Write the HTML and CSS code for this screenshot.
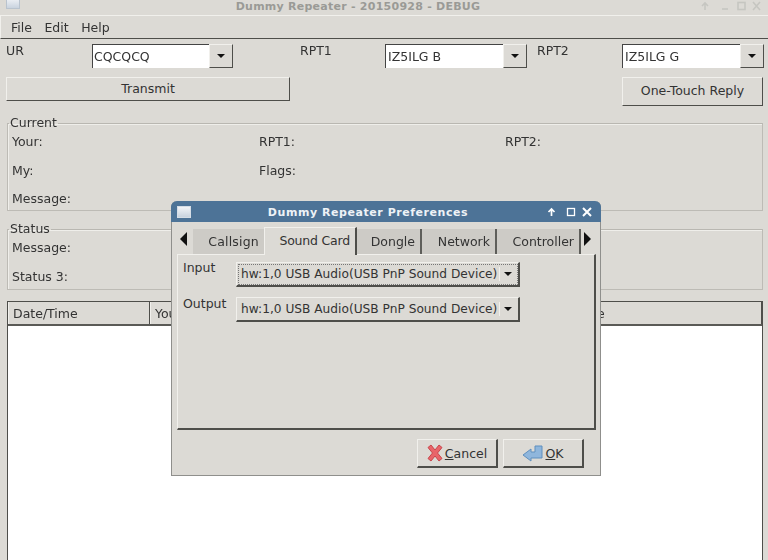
FILE: index.html
```html
<!DOCTYPE html>
<html lang="en">
<head>
<meta charset="utf-8">
<title>Dummy Repeater</title>
<link rel="stylesheet" href="styles.css">
</head>
<body>
<div class="desktop">
  <div class="main">
    <header class="titlebar">
      <span class="wm-icon"></span>
      <span class="title">Dummy Repeater - 20150928 - DEBUG</span>
      <span class="wm-buttons">
        <svg width="62" height="12" viewBox="0 0 62 12"><g fill="none" stroke="#c6c6c1" stroke-width="1.6"><path d="M5 10V3M2 6l3-3 3 3"/><path d="M22 9h6"/><rect x="38" y="2.500" width="7" height="7"/><path d="M53 2l7 8M60 2l-7 8"/></g></svg>
      </span>
    </header>
    <nav class="menubar"><span>File</span><span>Edit</span><span>Help</span></nav>
    <div class="callrow">
      <span class="lbl lbl-ur">UR</span>
      <div class="combo combo-ur"><span class="combo-text">CQCQCQ</span><span class="combo-btn"><i class="arrow"></i></span></div>
      <span class="lbl lbl-rpt1">RPT1</span>
      <div class="combo combo-r1"><span class="combo-text">IZ5ILG B</span><span class="combo-btn"><i class="arrow"></i></span></div>
      <span class="lbl lbl-rpt2">RPT2</span>
      <div class="combo combo-r2"><span class="combo-text">IZ5ILG G</span><span class="combo-btn"><i class="arrow"></i></span></div>
    </div>
    <div class="actionrow">
      <button class="btn btn-tx">Transmit</button>
      <button class="btn btn-reply">One-Touch Reply</button>
    </div>
    <fieldset class="group group-current">
      <legend>Current</legend>
      <div class="fields">
        <span>Your:</span><span>RPT1:</span><span>RPT2:</span>
        <span>My:</span><span>Flags:</span><span></span>
        <span>Message:</span><span></span><span></span>
      </div>
    </fieldset>
    <fieldset class="group group-status">
      <legend>Status</legend>
      <div class="fields">
        <span>Message:</span><span></span><span></span>
        <span>Status 3:</span><span></span><span></span>
      </div>
    </fieldset>
    <section class="list">
      <div class="list-head">
        <span class="col col-date">Date/Time</span>
        <span class="col col-your">Your</span>
        <span class="col col-msg">Message</span>
      </div>
      <div class="list-body"></div>
    </section>
  </div>

  <div class="dialog">
    <header class="dlg-title">
      <span class="wm-icon dlg-icon"></span>
      <span class="dlg-name">Dummy Repeater Preferences</span>
      <svg class="dlg-buttons" width="46" height="12" viewBox="0 0 46 12"><g fill="none" stroke="#fff" stroke-width="1.7"><path d="M4.500 10V3M1.500 6l3-3 3 3"/><rect x="20.500" y="2.500" width="7" height="7" stroke-width="1.3"/><path d="M36 2l8 8M44 2l-8 8" stroke-width="2"/></g></svg>
    </header>
    <div class="dlg-body">
      <div class="tabs">
        <i class="tab-arrow tab-arrow-l"></i>
        <span class="tab tab-callsign">Callsign</span>
        <span class="tab tab-active">Sound Card</span>
        <span class="tab tab-dongle">Dongle</span>
        <span class="tab tab-network">Network</span>
        <span class="tab tab-controller">Controller</span>
        <i class="tab-arrow tab-arrow-r"></i>
      </div>
      <div class="panel">
        <div class="panel-row">
          <span class="panel-lbl">Input</span>
          <div class="select select-focus"><span class="select-text">hw:1,0 USB Audio(USB PnP Sound Device)</span><i class="arrow"></i></div>
        </div>
        <div class="panel-row">
          <span class="panel-lbl">Output</span>
          <div class="select"><span class="select-text">hw:1,0 USB Audio(USB PnP Sound Device)</span><i class="arrow"></i></div>
        </div>
      </div>
      <div class="dlg-actions">
        <button class="btn dlg-btn">
          <svg width="16" height="18" viewBox="0 0 16 18"><path d="M1 3.500L4 1l4 5 4-5 3 2.500L10.500 9 15 14.500 12 17l-4-5-4 5-3-2.500L5.500 9z" fill="#e8656a" stroke="#c9454b"/></svg>
          <span class="dlg-btn-text"><u>C</u>ancel</span>
        </button>
        <button class="btn dlg-btn dlg-ok">
          <svg width="21" height="18" viewBox="0 0 21 18"><path d="M1 11l8-6v3h4V2h7v12H9v3z" fill="#8fb6dc" stroke="#5f8fbe"/></svg>
          <span class="dlg-btn-text"><u>O</u>K</span>
        </button>
      </div>
    </div>
  </div>
</div>
</body>
</html>
```
FILE: styles.css
```css
* { box-sizing: border-box; }
html, body { margin: 0; padding: 0; }
body {
  width: 768px;
  height: 560px;
  overflow: hidden;
  background: #dcdad5;
  font-family: "DejaVu Sans", sans-serif;
  font-size: 12.5px;
  color: #333;
}
.desktop { position: relative; width: 768px; height: 560px; overflow: hidden; filter: blur(0.5px); }
.main { display: flex; flex-direction: column; height: 560px; }

.titlebar {
  height: 15px;
  display: flex;
  align-items: center;
  justify-content: center;
  position: relative;
  background: #dcdad5;
}
.title { font-weight: bold; font-size: 11px; letter-spacing: 0.25px; color: #9a9a96; margin: -2px 52px 0 0; }
.wm-icon {
  position: absolute; left: 6px; top: -3px;
  width: 14px; height: 12px;
  background: linear-gradient(#f2f4f7, #c9d3df);
  border: 1px solid #b9c3ce;
}
.wm-buttons { position: absolute; right: 6px; top: 0; height: 12px; display: flex; }

.menubar {
  height: 24px;
  display: flex;
  align-items: center;
  gap: 12.500px;
  padding-left: 10px;
  border-top: 1px solid #f1f0ec;
  border-bottom: 1px solid #4e4e4a;
  border-left: 1px solid #f1f0ec;
}
.callrow { position: relative; height: 38px; }
.lbl { position: absolute; top: 4px; }
.lbl-ur { left: 6px; }
.lbl-rpt1 { left: 300px; }
.lbl-rpt2 { left: 537px; }
.combo { position: absolute; top: 5px; display: flex; height: 24px; }
.combo-ur { left: 92px; width: 141px; }
.combo-r1 { left: 385px; width: 142px; }
.combo-r2 { left: 622px; width: 142px; }
.combo-text {
  flex: 1;
  background: #fff;
  border-top: 1px solid #444;
  border-left: 1px solid #444;
  padding: 4px 0 0 2px;
  line-height: 16px;
}
.combo-ur .combo-text { padding-left: 1px; }
.combo-btn {
  width: 24px;
  display: flex; align-items: center; justify-content: center;
  background: #dcdad5;
  border-top: 1px solid #f1f0ec;
  border-left: 1px solid #f1f0ec;
  border-right: 1px solid #4e4e4a;
  border-bottom: 1px solid #4e4e4a;
}
.arrow {
  display: block; width: 0; height: 0;
  border-left: 4px solid transparent;
  border-right: 4px solid transparent;
  border-top: 4px solid #111;
}
.actionrow { position: relative; height: 45px; }
.btn {
  font: inherit;
  color: #333;
  background: #dcdad5;
  border: 1px solid #f1f0ec;
  border-right: 1px solid #4e4e4a;
  border-bottom: 1px solid #4e4e4a;
  padding: 0;
}
.btn-tx { position: absolute; left: 6px; top: 0; width: 284px; height: 24px; padding-bottom: 2px; }
.btn-reply { position: absolute; left: 622px; top: 0; width: 141px; height: 29px; padding-bottom: 3px; }

.group {
  margin: 0 5px 0 7px;
  padding: 0;
  border: 1px solid #bdbbb5;
  border-top-color: #b9b7b1;
  box-shadow: 1px 1px 0 #efeeea inset;
  min-width: 0;
}
.group legend { padding: 0 1px; margin-left: 1px; line-height: 14px; height: 14px; }
.group-current { height: 95px; margin-top: -6px; }
.group-status { height: 68px; margin-top: 11px; }
.fields {
  display: grid;
  grid-template-columns: 247px 246px 1fr;
  grid-auto-rows: 28.500px;
  padding: 4px 0 0 4px;
}
.fields span { line-height: 16px; }

.list {
  flex: 1;
  margin: 11px 5px 0 7px;
  display: flex;
  flex-direction: column;
  border-left: 1px solid #4e4e4a;
  border-right: 1px solid #4e4e4a;
  border-top: 1px solid #4e4e4a;
}
.list-head {
  height: 24px;
  display: flex;
  border-bottom: 2px solid #5a5a56;
}
.col { padding: 4px 0 0 4px; line-height: 16px; border-left: 1px solid #f1f0ec; border-right: 1px solid #4e4e4a; }
.col-date { width: 142px; }
.col-your { width: 395px; }
.col-msg { flex: 1; }
.list-body { flex: 1; background: #fff; }

.dialog {
  position: absolute;
  left: 171px; top: 201px;
  width: 430px; height: 275px;
  display: flex;
  flex-direction: column;
  background: #dcdad5;
  border-radius: 6px 6px 0 0;
  border: 1px solid #8f8f8c;
  border-top: 0;
}
.dlg-title {
  height: 21px;
  margin: 0 -1px;
  background: #4d7397;
  border-radius: 6px 6px 0 0;
  display: flex;
  align-items: center;
  justify-content: center;
  position: relative;
}
.dlg-name { color: #eef2f6; font-weight: bold; font-size: 11px; letter-spacing: 0.55px; margin: 2px 36px 0 0; }
.dlg-icon { left: 6px; top: 5px; border-color: #d5dde6; }
.dlg-buttons { position: absolute; right: 8px; top: 5px; }
.dlg-body { flex: 1; display: flex; flex-direction: column; padding-left: 5px; }

.tabs { position: relative; height: 32px; display: flex; align-items: flex-end; padding-left: 16px; }
.tab-arrow { position: absolute; top: 10px; width: 0; height: 0; border-top: 7px solid transparent; border-bottom: 7px solid transparent; }
.tab-arrow-l { left: 3px; border-right: 7px solid #111; }
.tab-arrow-r { left: 407px; border-left: 7px solid #111; }
.tab {
  height: 25px;
  line-height: 26px;
  background: #cdcbc6;
  border-right: 2px solid #5e5e5a;
  text-align: right;
  padding-right: 5px;
}
.tab-callsign { width: 71px; border-right: 0; letter-spacing: 0.2px; }
.tab-active {
  height: 28px;
  line-height: 26px;
  width: 93px;
  background: #dcdad5;
  border-top: 1px solid #f1f0ec;
  border-left: 1px solid #f1f0ec;
  border-right: 2px solid #4e4e4a;
  padding-right: 5px;
  letter-spacing: -0.2px;
  position: relative;
  top: 1px;
}
.tab-dongle { width: 65px; }
.tab-network { width: 75px; }
.tab-controller { width: 84px; }

.panel {
  height: 176px;
  width: 419px;
  border: 1px solid #f1f0ec;
  border-right: 2px solid #4e4e4a;
  border-bottom: 2px solid #4e4e4a;
  padding: 5px 0 0 5px;
  display: flex;
  flex-direction: column;
  gap: 10px;
}
.panel-row { display: flex; height: 25px; }
.panel-row + .panel-row .panel-lbl { margin-top: 1px; }
.panel-lbl { width: 53px; line-height: 16px; }
.select {
  width: 284px;
  height: 25px;
  margin-top: 2px;
  display: flex;
  align-items: center;
  background: #dcdad5;
  border: 1px solid #f1f0ec;
  border-right: 2px solid #4e4e4a;
  border-bottom: 2px solid #4e4e4a;
  padding-left: 4px;
  font-size: 12.200px;
}
.select-focus { outline: 1px dotted #777; outline-offset: -3px; }
.select-text { white-space: nowrap; padding-right: 2px; border-right: 1px solid #f1f0ec; }
.select .arrow { margin-left: 4px; }

.dlg-actions { display: flex; justify-content: flex-end; gap: 5px; padding: 9px 16px 0 0; }
.dlg-btn {
  width: 81px; height: 29px;
  display: flex; align-items: center; justify-content: center; gap: 2px;
  border-right-width: 2px;
  border-bottom-width: 2px;
}
.dlg-btn-text { padding-top: 1px; }
```
